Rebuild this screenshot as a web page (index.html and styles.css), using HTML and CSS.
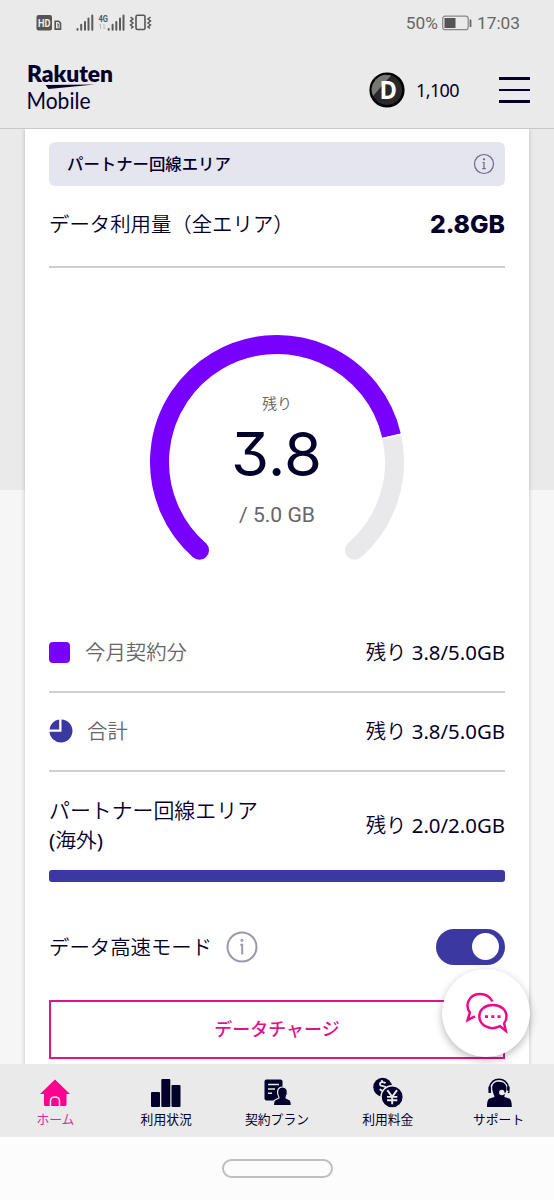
FILE: index.html
```html
<!DOCTYPE html>
<html lang="ja">
<head>
<meta charset="utf-8">
<title>Rakuten Mobile</title>
<link rel="stylesheet" href="styles.css">
</head>
<body>
<div class="screen">
  <div class="status">
    <svg class="status-icons" width="118" height="20" viewBox="0 0 118 20">
      <rect x="0.500" y="2" width="15.500" height="15.500" rx="2" fill="#555"/>
      <text x="2" y="13.500" font-size="10.500" font-weight="700" fill="#eee" textLength="12.500" lengthAdjust="spacingAndGlyphs">HD</text>
      <path d="M19.200 8.300h3.500l1.800 1.800v6h-5.300z" fill="none" stroke="#555" stroke-width="1.600"/><path d="M21 11h1.200v3.500" fill="none" stroke="#555"/>
      <path d="M41.500 16.700v-.7M45.200 16.700v-5M49 16.700V9M52.500 16.700V5.500M56.300 16.700V2.500M72.700 16.700v-.7M76.600 16.700v-5M80.300 16.700V9M84 16.700V5.500M87.500 16.700V2.500" stroke="#5a5a5a" stroke-width="2" stroke-linecap="round"/>
      <text x="62.500" y="8.500" font-size="9.500" font-weight="700" fill="#555" textLength="9.500" lengthAdjust="spacingAndGlyphs">4G</text>
      <path d="M64.500 16v-5l-1.500 1.500M68 11v5l1.500-1.500" fill="none" stroke="#bbb"/>
      <rect x="100" y="2.200" width="9" height="14.300" rx="1.500" fill="none" stroke="#555" stroke-width="1.600"/>
      <path d="M94.500 4l2.500 2-2.500 2 2.500 2-2.500 2 2.500 2-2 1.500M114.500 4l-2.500 2 2.500 2-2.500 2 2.500 2-2.500 2 2 1.500" fill="none" stroke="#555" stroke-width="1.500"/>
    </svg>
    <div class="status-right">
      <span class="percent">50%</span>
      <svg width="30" height="16" viewBox="0 0 30 16"><rect x="0.700" y="1.200" width="25.500" height="13.500" rx="2.500" fill="none" stroke="#888" stroke-width="1.200"/><rect x="2.500" y="3" width="11" height="10" fill="#555"/><path d="M28.500 4.500v7.500" stroke="#666" stroke-width="1.800"/></svg>
      <span class="clock">17:03</span>
    </div>
  </div>

  <header class="header">
    <svg class="logo" width="90" height="52" viewBox="0 0 90 52">
      <text x="0" y="19" font-family="Lato" font-size="23" font-weight="800" textLength="86" lengthAdjust="spacingAndGlyphs">Rakuten</text>
      <path d="M18.500 22l49-.500-46 4.600z"/>
      <text x="-0.500" y="45.500" font-family="Lato" font-size="22.500" textLength="64" lengthAdjust="spacingAndGlyphs">Mobile</text>
    </svg>
    <div class="header-right">
      <svg width="36" height="36" viewBox="0 0 36 36">
        <circle cx="18" cy="18" r="16.300" fill="#292929" stroke="#000" stroke-width="2.600"/>
        <path d="M4 24A15 15 0 0 1 22 3.600z" fill="#777"/>
        <text x="10.500" y="27" font-family="Open Sans" font-size="25" font-weight="700" fill="#fff" textLength="17.500" lengthAdjust="spacingAndGlyphs">D</text>
      </svg>
      <span class="points">1,100</span>
      <span class="menu"><i></i><i></i><i></i></span>
    </div>
  </header>

  <main class="main">
    <section class="card">
      <div class="banner">
        <span>パートナー回線エリア</span>
        <svg width="22" height="22" viewBox="0 0 22 22" fill="none" stroke="#6a6787" stroke-width="1.200"><circle cx="11" cy="11" r="9.500"/><path d="M9.500 9.500H11v6.200M9.300 15.700h3.400"/><circle cx="11" cy="6.300" r=".5" fill="#6a6787"/></svg>
      </div>
      <div class="row usage"><span>データ利用量（全エリア）</span><strong>2.8GB</strong></div>
      <div class="gauge">
        <svg width="256" height="234" viewBox="-128 -128 256 234">
          <path d="M114.540 -26.200A117.500 117.500 0 0 1 77.500 88.300" fill="none" stroke="#e9e9eb" stroke-width="19"/>
          <circle cx="77.500" cy="88.300" r="9.500" fill="#e9e9eb"/>
          <path d="M-77.500 88.300A117.500 117.500 0 1 1 114.540 -26.200" fill="none" stroke="#7700ff" stroke-width="19"/>
          <circle cx="-77.500" cy="88.300" r="9.500" fill="#7700ff"/>
          <path d="M104 -23.100L126 -28.100" stroke="#fff" stroke-width="1.600"/>
          <text class="g-label" x="0" y="-53.500" text-anchor="middle">残り</text>
          <text class="g-value" x="-46" y="14" textLength="91" lengthAdjust="spacingAndGlyphs">3.8</text>
          <text class="g-total" x="-38" y="60" textLength="76" lengthAdjust="spacingAndGlyphs">/ 5.0 GB</text>
        </svg>
      </div>
      <div class="row month"><span class="key"><i class="swatch"></i>今月契約分</span><span class="val">残り <span class="num">3.8/5.0GB</span></span></div>
      <div class="row total"><span class="key"><svg width="24" height="24" viewBox="0 0 24 24"><path d="M12.500 .5A11.500 11.500 0 1 1 .5 12.700h12z" fill="#3c38a2"/><path d="M10.200 .6v9.900H.6A11 11 0 0 1 10.200 .6z" fill="#3c38a2"/></svg>合計</span><span class="val">残り <span class="num">3.8/5.0GB</span></span></div>
      <div class="row overseas"><span><span class="area">パートナー回線エリア</span><br><span class="num">(</span>海外<span class="num">)</span></span><span class="val">残り <span class="num">2.0/2.0GB</span></span></div>
      <div class="bar"></div>
      <div class="row mode">
        <span class="mode-label">データ高速モード
          <svg width="32" height="32" viewBox="0 0 32 32" fill="none" stroke="#9a9aad" stroke-width="2"><circle cx="16" cy="16" r="14.500"/><path d="M14.300 13.700h1.900V23.500"/><circle cx="16" cy="9.300" r=".6" fill="#9a9aad"/></svg>
        </span>
        <span class="toggle"><i></i></span>
      </div>
      <div class="charge">データチャージ</div>
    </section>
    <div class="chat">
      <svg width="44" height="44" viewBox="0 0 44 44" fill="none" stroke="#ee0a87" stroke-width="2.500">
        <path d="M28.500 10.500C23 .5 8.500 .8 4.300 10.500c-1.700 4.500-.3 8.500 1.600 11L3.600 29l7.300-3.600"/>
        <path d="M36 35.200C27 40 15.500 35 15.300 25.500 15.300 18 21.500 14 28.800 14s13.700 4 13.700 11.500c0 3-1 5-2.400 6.700l1.700 7.600z"/>
        <path d="M21 25.700h3M27.300 25.700h3M33.500 25.700h3" stroke-width="2.800"/>
      </svg>
    </div>
  </main>

  <nav class="nav">
    <div class="tab active">
      <svg width="32" height="30" viewBox="0 0 32 30"><path d="M16 1L31 15.500h-3.500V26q0 1.500-1.500 1.500H6.500Q5 27.500 5 26V15.500H1z" fill="#ff0090"/><path d="M11.500 28v-5.500q0-4 4.500-4t4.500 4V28" fill="none" stroke="#eaeaea" stroke-width="1.500"/><path d="M13.300 27.500v-5q0-2 2.700-2t2.700 2v5z" fill="#ff0090"/></svg>ホーム</div>
    <div class="tab">
      <svg width="32" height="30" viewBox="0 0 32 30" fill="currentColor"><rect x="1" y="13.500" width="9" height="15" rx="1"/><rect x="11.300" y=".5" width="9" height="28" rx="1"/><rect x="21.500" y="6.500" width="9" height="22" rx="1"/></svg>利用状況</div>
    <div class="tab">
      <svg width="32" height="30" viewBox="0 0 32 30" fill="currentColor"><rect x="3.500" y="1" width="18" height="21" rx="2"/><path d="M7 6h11M7 10.500h7M7 14.800h4" stroke="#eaeaea" stroke-width="1.600"/><path d="M21.500 8.500c4 0 5.300 3 4.800 6.500-.3 2-1.300 3-1.300 4.500l4 2c1.500 1 1.300 4 1.300 5.500H12.500c0-2 0-4.500 1.500-5.500l4-2c0-1.500-1-2.500-1.300-4.500-.5-3.500 .8-6.500 4.800-6.500z" stroke="#eaeaea" stroke-width="1.200"/></svg>契約プラン</div>
    <div class="tab">
      <svg width="32" height="32" viewBox="0 -1 32 32" fill="currentColor"><circle cx="10.500" cy="8.500" r="9.700"/><path d="M13.500 4.500c-3-2.500-7-1-5.500 1.700 1.300 2 5 .3 6 3 1 3-4 4.500-6.500 1.300M9.300 1.200l1 2M12 12.500l1 2.500" fill="none" stroke="#eaeaea" stroke-width="1.900"/><circle cx="20.300" cy="18.500" r="11.500" stroke="#eaeaea" stroke-width="1.500"/><path d="M15.300 11.500l5 7 5-7M15 18.500h10.600M15 22h10.600M20.300 18.500V26" fill="none" stroke="#eaeaea" stroke-width="2"/></svg>利用料金</div>
    <div class="tab">
      <svg width="32" height="30" viewBox="0 0 32 30" fill="currentColor"><path d="M6.500 12V9.500C7.500-2.300 24.500-2.300 25.500 9.500V12" fill="none" stroke="currentColor" stroke-width="1.500"/><path d="M16 3.300c6 0 8.300 4 7.300 8.700-.5 3-2 4.500-2 6.500l5 1.500c2 1 2.500 4.500 2.500 8.500H4c0-4 .5-7.500 2.500-8.500l5-1.500c0-2-1.500-3.500-2-6.500-1-4.700 .5-8.700 6.500-8.700z"/><path d="M6.700 8v6.500M25.300 8v6.500" stroke="currentColor" stroke-width="2.400"/><circle cx="18.800" cy="14" r="2.700" fill="#eaeaea"/><path d="M20 15.300q4 0 5-3" fill="none" stroke="#eaeaea" stroke-width="1.300"/></svg>サポート</div>
  </nav>
  <div class="gesture"><i></i></div>
</div>
</body>
</html>
```

FILE: styles.css
```css
* { box-sizing: border-box; }
body { margin: 0; font-family: "Noto Sans", "Noto Sans CJK JP", sans-serif; color: #03002c; }
svg { display: block; flex: none; overflow: visible; }
.screen { width: 554px; height: 1200px; display: flex; flex-direction: column; background: #eaeaea; overflow: hidden; }

.status { height: 46px; flex: none; display: flex; justify-content: space-between; align-items: center; padding: 0 34px 0 36px; font-family: Roboto, sans-serif; color: #666; }
.status-right { display: flex; align-items: center; font-size: 17.3px; }
.percent { margin-right: 4px; }
.clock { margin-left: 5px; }

.header { height: 83px; flex: none; display: flex; justify-content: space-between; padding: 15px 24px 0 27px; border-bottom: 1px solid #c8c8cb; }
.logo { margin-top: 2px; fill: #03002c; }
.header-right { display: flex; align-items: center; height: 58px; }
.points { font-size: 18px; letter-spacing: -0.6px; width: 44px; margin: 0 1px 0 11px; white-space: nowrap; }
.menu { display: flex; flex-direction: column; gap: 9px; width: 31px; margin-left: 38px; }
.menu i { height: 2.4px; background: #03002c; }

.main { position: relative; height: 935px; flex: none; padding: 0 25px; background: linear-gradient(#eaeaea 361px, #f6f6f6 361px); overflow: hidden; }
.card { height: 960px; padding: 12.5px 24px 0; background: #fff; box-shadow: 0 0 4px rgba(20, 20, 50, .24); }
.row { display: flex; align-items: center; justify-content: space-between; font-size: 20.8px; line-height: 30px; font-weight: 350; }
.banner { height: 44px; padding: 0 10px 2px 18px; border-radius: 6px; background: #e5e5ef; display: flex; align-items: center; justify-content: space-between; font-size: 16.4px; font-weight: 500; }
.banner svg { margin-top: 2px; }
.usage { height: 82px; padding-bottom: 4px; border-bottom: 2px solid #cdced4; font-size: 20.4px; }
.usage strong { font-family: Inter, sans-serif; font-size: 24.7px; font-weight: 800; }
.gauge { height: 346px; padding-top: 66px; display: flex; justify-content: center; }
.g-label { font-size: 15px; font-weight: 350; fill: #666; }
.g-value { font-family: Inter, sans-serif; font-size: 60px; font-feature-settings: "cv09"; fill: #03002c; }
.g-total { font-family: Roboto, sans-serif; font-size: 20.5px; fill: #666; }
.month { height: 79px; border-bottom: 2px solid #cdced6; }
.total { height: 79px; padding-bottom: 1px; border-bottom: 2px solid #cdced6; }
.key { display: flex; align-items: center; color: #666; font-size: 20.4px; }
.swatch { width: 21px; height: 21px; border-radius: 4px; background: #7700ff; margin-right: 15px; }
.key svg { margin-right: 14px; }
.val { font-size: 20.4px; }
.num { font-weight: 400; }
.overseas { height: 98px; padding-top: 8px; }
.area { font-size: 20.9px; }
.bar { height: 12px; border-radius: 3px; background: #3c38a2; }
.mode { height: 118px; padding-top: 12px; }
.mode-label { display: flex; align-items: center; gap: 14px; font-size: 20.4px; }
.toggle { width: 69px; height: 36px; border-radius: 18px; padding: 4px 6px; background: #3c38a2; display: flex; justify-content: flex-end; align-items: center; }
.toggle i { width: 27px; height: 27px; border-radius: 50%; background: #fff; }
.charge { height: 59.5px; padding-bottom: 3px; border: 2px solid #e0148a; color: #e0148a; display: flex; align-items: center; justify-content: center; font-size: 18px; font-weight: 500; }
.chat { position: absolute; left: 442px; top: 840px; width: 88px; height: 88px; border-radius: 50%; background: #fff; display: flex; align-items: center; justify-content: center; box-shadow: 0 3px 8px rgba(0, 0, 0, .28); }

.nav { height: 73px; flex: none; display: grid; grid-template-columns: repeat(5, 1fr); background: #eaeaea; }
.tab { display: flex; flex-direction: column; align-items: center; padding-top: 14px; font-size: 12.8px; line-height: 20px; white-space: nowrap; }
.tab svg { height: 31px; }
.active { color: #d92a96; }
.gesture { flex: 1; background: #fcfcfc; display: flex; justify-content: center; padding-top: 22px; }
.gesture i { width: 111px; height: 19px; border: 2px solid #bfbfbf; border-radius: 10px; }
```
